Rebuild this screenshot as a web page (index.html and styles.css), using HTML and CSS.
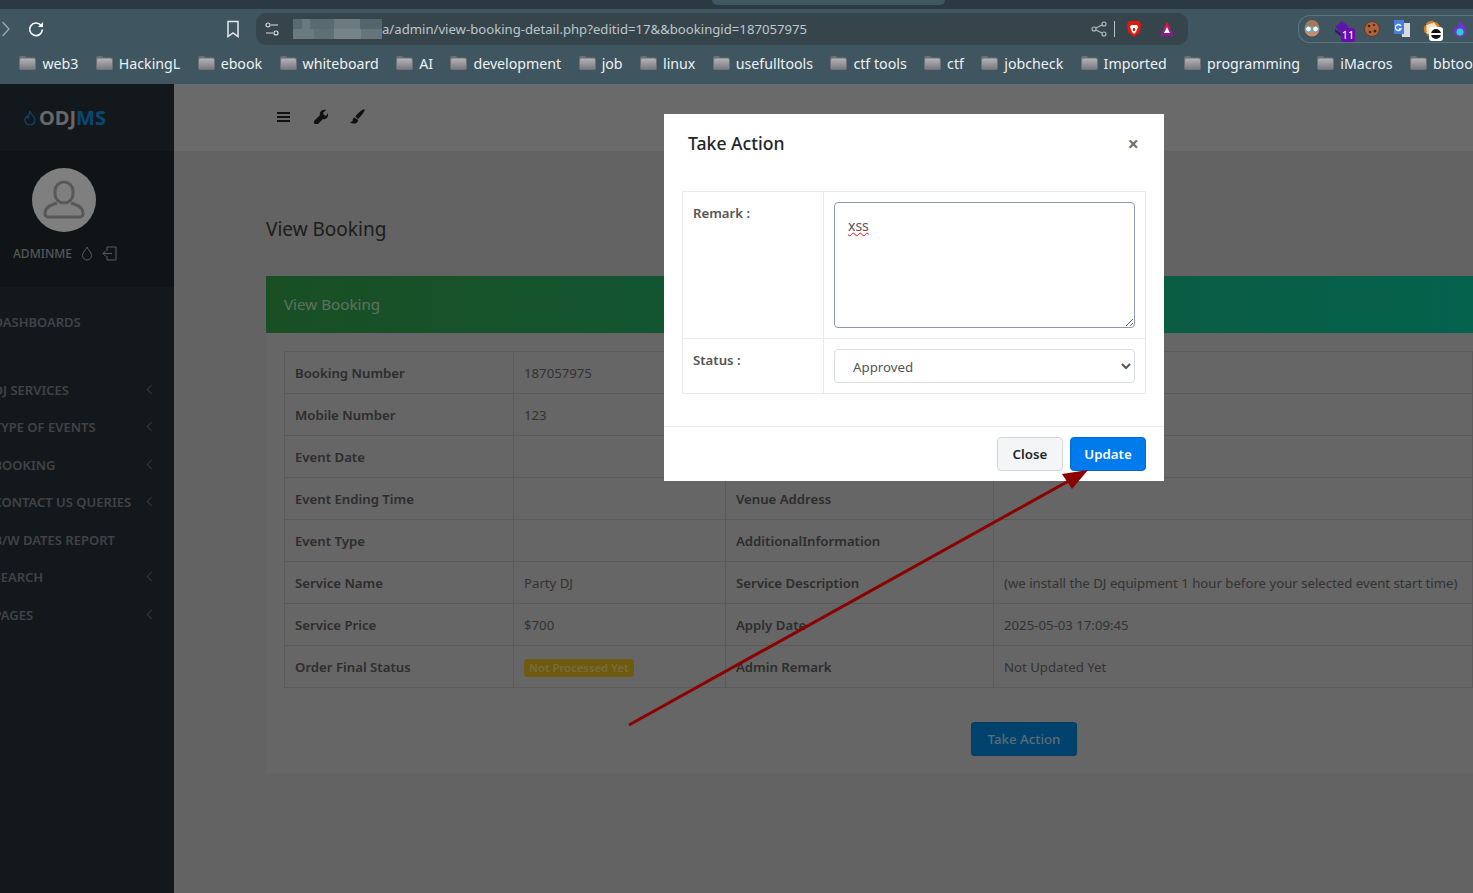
FILE: index.html
```html
<!DOCTYPE html>
<html>
<head>
<title>View Booking</title>
<link rel="stylesheet" href="styles.css">
</head>
<body>
<svg class="defs" width="0" height="0">
  <defs>
    <linearGradient id="folderfill" x1="0" y1="0" x2="0" y2="1">
      <stop offset="0" stop-color="#b4b4b8"/>
      <stop offset="1" stop-color="#77777c"/>
    </linearGradient>
  </defs>
  <symbol id="folder" viewBox="0 0 17 14">
    <path d="M2 0h4l1.500 1.500H15a2 2 0 0 1 2 2V12a2 2 0 0 1-2 2H2a2 2 0 0 1-2-2V2a2 2 0 0 1 2-2z" fill="#6f7075"/>
    <rect x="1" y="2.500" width="15" height="11" rx="1.500" fill="url(#folderfill)"/>
  </symbol>
</svg>

<div class="tabstrip"><div class="tab"></div></div>

<div class="toolbar">
  <svg class="forward" width="10" height="18" viewBox="0 0 10 18"><path d="M1.500 2l6.500 7-6.500 7" fill="none" stroke="#9fb0b8" stroke-width="1.200"/></svg>
  <svg class="reload" width="18" height="18" viewBox="0 0 18 18"><path d="M14 5.500a6.300 6.300 0 1 0 1.300 4" fill="none" stroke="#fff" stroke-width="1.600"/><path d="M11 7h5V2z" fill="#fff"/></svg>
  <svg class="bookmark" width="14" height="18" viewBox="0 0 14 18"><path d="M2 1.500h10v15l-5-3.500-5 3.500z" fill="none" stroke="#e6eaec" stroke-width="1.500"/></svg>
  <div class="urlbar">
    <svg width="16" height="16" viewBox="0 0 16 16"><g fill="none" stroke="#d8dee1" stroke-width="1.200"><circle cx="4" cy="4" r="2"/><path d="M7 4h7M2 12h7"/><circle cx="12" cy="12" r="2"/></g></svg>
    <div class="blurred"></div>
    <span class="url">a/admin/view-booking-detail.php?editid=17&amp;&amp;bookingid=187057975</span>
    <svg class="share" width="16" height="16" viewBox="0 0 16 16"><g fill="none" stroke="#b4bec3" stroke-width="1.100"><circle cx="3" cy="8" r="2"/><circle cx="13" cy="3" r="2"/><circle cx="13" cy="13" r="2"/><path d="M5 7l6-3M5 9l6 3"/></g></svg>
    <span class="sep"></span>
    <svg class="brave" width="16" height="18" viewBox="0 0 16 18"><path d="M3 1h10l2 3-1 8-6 5-6-5-1-8z" fill="#e3170a"/><path d="M5 5h6l1 2-2 5-2 2-2-2-2-5z" fill="#fff"/><path d="M7 8h2v3H7z" fill="#e3170a"/></svg>
    <svg class="rewards" width="16" height="16" viewBox="0 0 16 16"><path d="M8 1l7 14H1z" fill="#8b1a8f"/><path d="M8 1l3.500 7-3.500-2-3.500 2z" fill="#e3173a"/><path d="M8 6l3 6H5z" fill="#fff"/></svg>
  </div>
  <div class="extensions">
    <svg width="18" height="18" viewBox="0 0 18 18"><circle cx="9" cy="9" r="7.500" fill="#c98d6c"/><path d="M2 7a7 7 0 0 1 14 0z" fill="#a7795a"/><circle cx="5.500" cy="9" r="3" fill="#dff" stroke="#6f8f99"/><circle cx="12.500" cy="9" r="3" fill="#dff" stroke="#6f8f99"/></svg>
    <span class="ext-badge-wrap">
      <svg width="18" height="18" viewBox="0 0 18 18"><path d="M9 1l7 6-7 6-7-6z" fill="#5b18a8"/><path d="M2 7v5l7 5 2-2-9-6z" fill="#3c1080"/></svg>
      <span class="badge-eleven">11</span>
    </span>
    <svg width="18" height="18" viewBox="0 0 18 18"><circle cx="9" cy="9" r="7.500" fill="#b0623c" stroke="#5c3a2c"/><circle cx="6" cy="6" r="1.300" fill="#3c2418"/><circle cx="11" cy="5" r="1.100" fill="#3c2418"/><circle cx="12" cy="11" r="1.500" fill="#3c2418"/><circle cx="7" cy="12" r="1.200" fill="#3c2418"/></svg>
    <svg width="18" height="18" viewBox="0 0 18 18"><path d="M8 3h9v14H9z" fill="#d8dcdf"/><path d="M1 0h10v14H1z" fill="#4a7fe0"/><path d="M8 6a3 3 0 1 0 0 3H6" fill="none" stroke="#fff" stroke-width="1.300"/></svg>
    <span class="ext-badge-wrap">
      <svg width="18" height="18" viewBox="0 0 18 18"><circle cx="9" cy="9" r="7" fill="#efe3cc" stroke="#d67e1c" stroke-width="2.400" stroke-dasharray="7 2"/></svg>
      <span class="badge-block"><i></i></span>
    </span>
    <svg width="14" height="18" viewBox="0 0 14 18"><path d="M7 0c1 4 6 6 6 11a6 6 0 0 1-12 0c0-2 1-4 2-5 0 2 1 2 2 2 1-3 1-5 2-8z" fill="#7a2ce0"/><circle cx="7" cy="12" r="3.500" fill="#25d3c6"/></svg>
  </div>
</div>

<div class="bookmarks">
  <span class="bar-edge"></span>
  <a class="bm"><svg><use href="#folder"/></svg>web3</a>
  <a class="bm"><svg><use href="#folder"/></svg>HackingL</a>
  <a class="bm"><svg><use href="#folder"/></svg>ebook</a>
  <a class="bm"><svg><use href="#folder"/></svg>whiteboard</a>
  <a class="bm"><svg><use href="#folder"/></svg>AI</a>
  <a class="bm"><svg><use href="#folder"/></svg>development</a>
  <a class="bm"><svg><use href="#folder"/></svg>job</a>
  <a class="bm"><svg><use href="#folder"/></svg>linux</a>
  <a class="bm"><svg><use href="#folder"/></svg>usefulltools</a>
  <a class="bm"><svg><use href="#folder"/></svg>ctf tools</a>
  <a class="bm"><svg><use href="#folder"/></svg>ctf</a>
  <a class="bm"><svg><use href="#folder"/></svg>jobcheck</a>
  <a class="bm"><svg><use href="#folder"/></svg>Imported</a>
  <a class="bm"><svg><use href="#folder"/></svg>programming</a>
  <a class="bm"><svg><use href="#folder"/></svg>iMacros</a>
  <a class="bm"><svg><use href="#folder"/></svg>bbtools</a>
</div>

<div class="viewport">
  <div class="app">
    <aside class="sidebar">
      <div class="brand">
        <svg width="14" height="16" viewBox="0 0 14 16"><path d="M7 1c0 3 5 5 5 9a5 5 0 0 1-10 0c0-2 1-3 2-4 0 1 .5 2 1.500 2C6 6 6 3 7 1z" fill="none" stroke="#1a8fe0" stroke-width="1.200"/></svg>
        <span class="brand-a">ODJ</span><span class="brand-b">MS</span>
      </div>
      <div class="user">
        <div class="avatar">
          <svg width="44" height="44" viewBox="0 0 44 44"><g fill="none" stroke="#b0b0b0" stroke-width="3"><rect x="13" y="4" width="18" height="21" rx="9"/><path d="M15 25c-6 2-12 4-12 10v1c0 2 2 3 3 3h32c1 0 3-1 3-3v-1c0-6-6-8-12-10"/></g></svg>
        </div>
        <div class="user-line">
          <span>ADMINME</span>
          <svg width="12" height="15" viewBox="0 0 12 15"><path d="M6 1c1 3 4.500 5 4.500 8.500a4.500 4.500 0 0 1-9 0C1.500 6 5 4 6 1z" fill="none" stroke="#b4b4b4" stroke-width="1"/></svg>
          <svg width="15" height="15" viewBox="0 0 15 15"><path d="M5 1h9v13H5v-4M5 5V1M10 7.500H1m3-3l-3 3 3 3" fill="none" stroke="#b4b4b4" stroke-width="1"/></svg>
        </div>
      </div>
      <ul class="menu">
        <li class="menu-first">DASHBOARDS</li>
        <li>DJ SERVICES<b></b></li>
        <li>TYPE OF EVENTS<b></b></li>
        <li>BOOKING<b></b></li>
        <li>CONTACT US QUERIES<b></b></li>
        <li>B/W DATES REPORT</li>
        <li>SEARCH<b></b></li>
        <li>PAGES<b></b></li>
      </ul>
    </aside>

    <div class="main">
      <div class="topbar">
        <svg width="13" height="12" viewBox="0 0 13 12"><path d="M0 1h13v2H0zM0 5h13v2H0zM0 9h13v2H0z" fill="#222"/></svg>
        <svg width="15" height="15" viewBox="0 0 15 15"><path d="M1 12l6-6c-1-3 2-6 6-5l-3 3 1 2 2 1 2-3c1 4-2 7-5 6l-6 6c-1 1-4-2-3-4z" fill="#222"/></svg>
        <svg width="15" height="15" viewBox="0 0 15 15"><path d="M14.500.500c-1-1-6 3-9 7l2.500 2.500c3-3 7.500-8.500 6.500-9.500zM4.500 8.500C2.500 9 3 11 2.500 12c-.5.800-1.500 1-2.500 1 2 2 6 2 7.500 0 .8-1 .5-2 0-2.500z" fill="#222"/></svg>
      </div>
      <div class="content">
        <h3 class="page-title">View Booking</h3>
        <div class="card">
          <div class="card-head">View Booking</div>
          <div class="card-body">
            <table class="details">
              <tr><th>Booking Number</th><td>187057975</td><th>Client Name</th><td>Test</td></tr>
              <tr><th>Mobile Number</th><td>123</td><th>Email</th><td></td></tr>
              <tr><th>Event Date</th><td></td><th>Event Starting Time</th><td></td></tr>
              <tr><th>Event Ending Time</th><td></td><th>Venue Address</th><td></td></tr>
              <tr><th>Event Type</th><td></td><th>AdditionalInformation</th><td></td></tr>
              <tr><th>Service Name</th><td>Party DJ</td><th>Service Description</th><td>(we install the DJ equipment 1 hour before your selected event start time)</td></tr>
              <tr><th>Service Price</th><td>$700</td><th>Apply Date</th><td>2025-05-03 17:09:45</td></tr>
              <tr><th>Order Final Status</th><td><span class="status">Not Processed Yet</span></td><th>Admin Remark</th><td>Not Updated Yet</td></tr>
            </table>
            <div class="action-row"><button class="btn-take">Take Action</button></div>
          </div>
        </div>
      </div>
    </div>
  </div>

  <div class="backdrop"></div>

  <div class="modal">
    <div class="modal-head">
      <h5>Take Action</h5>
      <span class="modal-x">×</span>
    </div>
    <div class="modal-body">
      <table class="form-table">
        <tr>
          <th>Remark :</th>
          <td><textarea class="remark" spellcheck="false">xss</textarea></td>
        </tr>
        <tr>
          <th>Status :</th>
          <td><select class="status-select"><option>Approved</option></select></td>
        </tr>
      </table>
    </div>
    <div class="modal-foot">
      <button class="btn-close">Close</button>
      <button class="btn-update">Update</button>
    </div>
  </div>

  <svg class="arrow" width="1473" height="809" viewBox="0 0 1473 809">
    <path d="M629 641L1074 394" stroke="#8b0000" stroke-width="3" fill="none"/>
    <path d="M1088 386L1062 390L1072 405z" fill="#8b0000"/>
  </svg>
</div>
</body>
</html>
```

FILE: styles.css
```css
* {
  box-sizing: border-box;
}

body {
  margin: 0;
  height: 893px;
  overflow: hidden;
  font-family: "Noto Sans", sans-serif;
  background-color: #fff;
}

svg {
  flex-shrink: 0;
}

.defs {
  display: block;
}

/* browser chrome */
.tabstrip {
  height: 9px;
  background-color: #2b3a42;
  padding-left: 712px;
}

.tab {
  width: 233px;
  height: 5px;
  background-color: #3f5761;
  border-radius: 0 0 6px 6px;
}

.toolbar {
  height: 40px;
  background-color: #3f5660;
  display: flex;
  align-items: center;
  position: relative;
}

.forward {
  margin-left: 1px;
}

.reload {
  margin-left: 16px;
}

.bookmark {
  margin-left: 181px;
}

.urlbar {
  width: 932px;
  height: 32px;
  margin-left: 16px;
  background-color: #36454c;
  border-radius: 10px;
  display: flex;
  align-items: center;
  padding-left: 8px;
  flex-shrink: 0;
}

.blurred {
  width: 89px;
  height: 20px;
  margin-left: 13px;
  background:
    linear-gradient(90deg, #5a6a71 0 10%, #6b7a81 10% 19%, #5a6a71 19% 46%, #6b7a81 46% 75%, #55656c 75% 100%) top / 100% 50% no-repeat,
    linear-gradient(90deg, #6b7a81 0 24%, #5f6f76 24% 46%, #76848a 46% 76%, #66757c 76% 100%) bottom / 100% 50% no-repeat;
}

.url {
  font-size: 13.150px;
  color: #bcc6cb;
  flex: 1;
}

.share {
  margin-right: 7px;
}

.sep {
  width: 1px;
  height: 16px;
  background-color: #b4bec3;
  margin-right: 11px;
}

.brave {
  margin-right: 17px;
}

.rewards {
  margin-right: 13px;
}

.extensions {
  margin-left: 110px;
  width: 190px;
  height: 28px;
  border: 1px solid #5a7480;
  border-right: none;
  border-radius: 12px 0 0 12px;
  display: flex;
  align-items: center;
  gap: 12px;
  padding-left: 4px;
  flex-shrink: 0;
}

.ext-badge-wrap {
  position: relative;
  display: flex;
}

.badge-eleven {
  position: absolute;
  left: 8px;
  top: 8px;
  width: 14px;
  height: 14px;
  background-color: #6a0dad;
  color: #fff;
  font-size: 11px;
  line-height: 14px;
  text-align: center;
  border-radius: 2px;
}

.badge-block {
  position: absolute;
  left: 6px;
  top: 7px;
  width: 14px;
  height: 14px;
  background-color: #fff;
  border-radius: 3px;
  display: flex;
  align-items: center;
  justify-content: center;
}

.badge-block i {
  width: 10px;
  height: 10px;
  border-radius: 50%;
  background: linear-gradient(#111 0 40%, #fff 40% 60%, #111 60% 100%);
}

.bookmarks {
  height: 35px;
  background-color: #3f5660;
  display: flex;
  align-items: center;
  white-space: nowrap;
  overflow: hidden;
  gap: 17.400px;
  padding: 0 0 7px 2px;
  font-size: 14.200px;
  color: #eef1f2;
}

.bar-edge {
  width: 1px;
  height: 16px;
  background-color: #24323a;
}

.bm {
  display: flex;
  align-items: center;
  gap: 6px;
}

.bm svg {
  width: 17px;
  height: 14px;
}

/* page */
.viewport {
  position: relative;
  height: 809px;
  overflow: hidden;
}

.app {
  display: flex;
  height: 100%;
}

.sidebar {
  width: 174px;
  flex-shrink: 0;
  background-color: #263038;
  color: #a8aeb3;
}

.brand {
  height: 67px;
  padding-left: 23px;
  display: flex;
  align-items: center;
  font-size: 20px;
  font-weight: 700;
}

.brand svg {
  margin-right: 2px;
}

.brand-a {
  color: #d0d0d0;
}

.brand-b {
  color: #1190e0;
}

.user {
  height: 136px;
  background-color: #20282e;
  padding-top: 17px;
}

.avatar {
  width: 64px;
  height: 64px;
  margin-left: 32px;
  border-radius: 50%;
  background-color: #fff;
  display: flex;
  align-items: center;
  justify-content: center;
}

.user-line {
  display: flex;
  align-items: center;
  gap: 9px;
  margin-top: 13px;
  padding-left: 13px;
  font-size: 12px;
  font-weight: 500;
}

.menu {
  list-style: none;
  padding: 17px 0 0;
  margin: 0 0 0 -6.500px;
  font-size: 13px;
  font-weight: 600;
  color: #80868c;
}

.menu li {
  height: 37.500px;
  line-height: 37.500px;
  position: relative;
}

.menu .menu-first {
  margin-bottom: 30px;
}

.menu b {
  position: absolute;
  right: 19px;
  top: 14px;
  width: 7px;
  height: 7px;
  border-left: 1px solid #6a7076;
  border-bottom: 1px solid #6a7076;
  transform: rotate(45deg);
}

.main {
  flex: 1;
  min-width: 0;
  background-color: #c6c6c6;
}

.topbar {
  height: 67px;
  background-color: #d4d4d4;
  display: flex;
  align-items: center;
  gap: 22.500px;
  padding: 0 0 2px 103px;
}

.content {
  padding: 65px 0 0 92px;
}

.page-title {
  margin: 0;
  padding-bottom: 8px;
  font-size: 19px;
  line-height: 27px;
  font-weight: 400;
  color: #3a3a3a;
}

.card {
  margin-top: 25px;
  background-color: #cccccc;
  height: 498px;
}

.card-head {
  height: 57px;
  padding-left: 18px;
  line-height: 57px;
  font-size: 15.200px;
  color: #bce0c4;
  background: linear-gradient(90deg, #349e46, #0ac49c);
}

.card-body {
  padding: 18px 0 0 18px;
}

.details {
  border-collapse: collapse;
  width: 1189px;
  table-layout: fixed;
  font-size: 13.200px;
  color: #666;
}

.details th,
.details td {
  height: 42px;
  border: 1px solid #b4b4b4;
  padding: 0 10px;
  text-align: left;
  white-space: nowrap;
}

.details th {
  font-weight: 600;
  color: #5a5a5a;
}

.details th:nth-child(1) {
  width: 229px;
}

.details td:nth-child(2) {
  width: 212px;
}

.details th:nth-child(3) {
  width: 268px;
}

.status {
  display: inline-block;
  background-color: #dcb420;
  color: #f0d878;
  border-radius: 3px;
  font-size: 11.300px;
  font-weight: 600;
  line-height: 18px;
  padding: 0 5px;
  position: relative;
  top: 1px;
}

.action-row {
  padding: 34px 0 0 687px;
}

.btn-take {
  width: 106px;
  height: 34px;
  border: 1px solid #0a78c0;
  border-radius: 3px;
  background-color: #0084dc;
  color: #b8d8ec;
  font-family: inherit;
  font-size: 13.300px;
  font-weight: 500;
  padding: 0;
}

.backdrop {
  position: absolute;
  inset: 0;
  background-color: rgba(0, 0, 0, 0.5);
}

/* dialog */
.modal {
  position: absolute;
  left: 664px;
  top: 30px;
  width: 500px;
  height: 367px;
  background-color: #fff;
}

.modal-head {
  display: flex;
  justify-content: space-between;
  align-items: center;
  padding: 14px 25px 16px 24px;
  height: 60px;
}

.modal-head h5 {
  margin: 0;
  font-size: 17.600px;
  font-weight: 500;
  color: #212529;
}

.modal-x {
  font-size: 20px;
  font-weight: 700;
  color: #6f6f6f;
}

.modal-body {
  padding: 17px 18px 0;
  height: 253px;
  border-bottom: 1px solid #e9ecef;
}

.form-table {
  border-collapse: collapse;
  width: 464px;
  table-layout: fixed;
}

.form-table th,
.form-table td {
  border: 1px solid #e9ecef;
  padding: 10px;
  vertical-align: top;
  text-align: left;
}

.form-table th {
  width: 141px;
  font-size: 13.200px;
  font-weight: 600;
  line-height: 22px;
  color: #555;
}

.remark {
  display: block;
  width: 301px;
  height: 126px;
  border: 1px solid #8d9ba8;
  border-radius: 4px;
  padding: 13px 13px;
  font-family: inherit;
  font-size: 14px;
  color: #555;
  outline: none;
  text-decoration: underline wavy #f01020 1.200px;
  text-underline-offset: 1px;
}

.status-select {
  display: block;
  width: 301px;
  height: 34px;
  border: 1px solid #d9dee3;
  border-radius: 4px;
  background-color: #fff;
  padding: 1px 0 0 14px;
  font-family: inherit;
  font-size: 13.300px;
  color: #555;
}

.modal-foot {
  display: flex;
  justify-content: flex-end;
  gap: 7px;
  padding: 10px 18px;
}

.modal-foot button {
  height: 34px;
  border-radius: 4px;
  font-family: inherit;
  font-size: 13.300px;
  font-weight: 600;
  padding: 0;
}

.btn-close {
  width: 66px;
  background-color: #f4f5f6;
  border: 1px solid #d4d7da;
  color: #212529;
}

.btn-update {
  width: 76px;
  background-color: #007bec;
  border: 1px solid #0069d9;
  color: #fff;
}

.arrow {
  position: absolute;
  left: 0;
  top: 0;
  pointer-events: none;
}
```
